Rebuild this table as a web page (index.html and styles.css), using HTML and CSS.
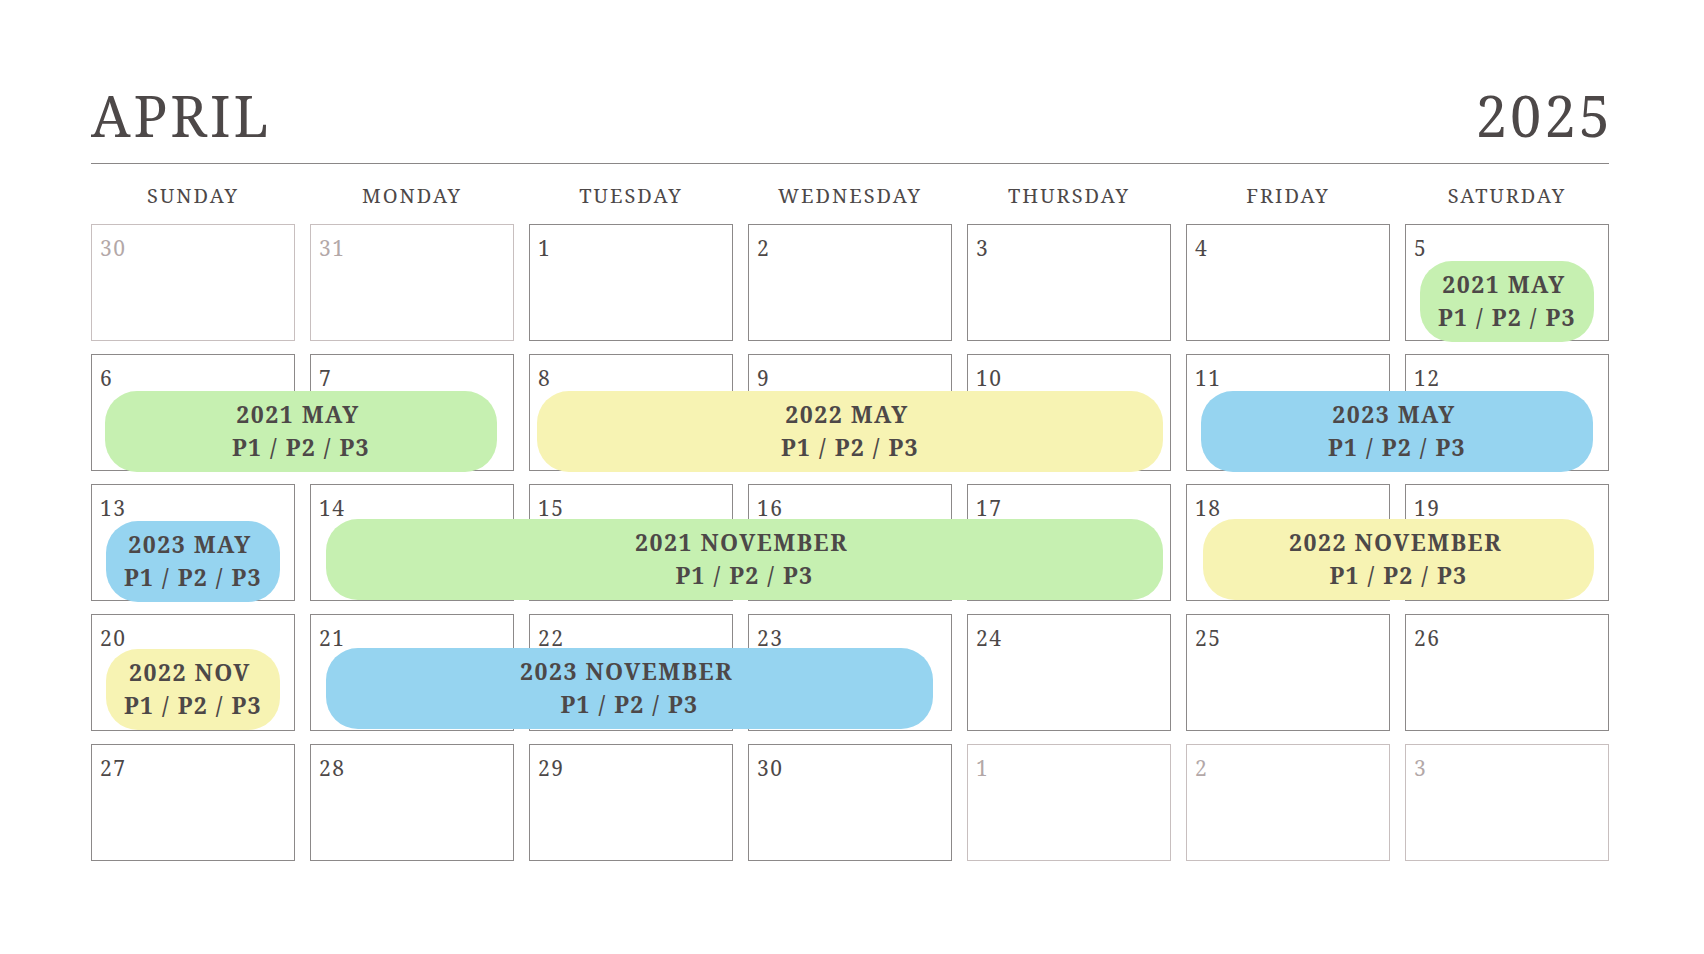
FILE: index.html
```html
<!DOCTYPE html>
<html lang="en">
<head>
<meta charset="utf-8">
<title>April 2025</title>
<link rel="stylesheet" href="styles.css">
</head>
<body>
<main class="page">
  <header class="head">
    <h1 class="month">APRIL</h1>
    <div class="year">2025</div>
  </header>
  <div class="weekdays">
    <div>SUNDAY</div><div>MONDAY</div><div>TUESDAY</div><div>WEDNESDAY</div><div>THURSDAY</div><div>FRIDAY</div><div>SATURDAY</div>
  </div>
  <div class="weeks">
    <div class="week">
      <div class="cell muted"><span class="num">30</span></div>
      <div class="cell muted"><span class="num">31</span></div>
      <div class="cell"><span class="num">1</span></div>
      <div class="cell"><span class="num">2</span></div>
      <div class="cell"><span class="num">3</span></div>
      <div class="cell"><span class="num">4</span></div>
      <div class="cell"><span class="num">5</span></div>
      <div class="event green ev-sat-1"><span class="t">2021 MAY</span><span>P1 / P2 / P3</span></div>
    </div>
    <div class="week">
      <div class="cell"><span class="num">6</span></div>
      <div class="cell"><span class="num">7</span></div>
      <div class="cell"><span class="num">8</span></div>
      <div class="cell"><span class="num">9</span></div>
      <div class="cell"><span class="num">10</span></div>
      <div class="cell"><span class="num">11</span></div>
      <div class="cell"><span class="num">12</span></div>
      <div class="event green ev-w2-sunmon"><span class="t">2021 MAY</span><span>P1 / P2 / P3</span></div>
      <div class="event yellow ev-w2-tuethu"><span class="t">2022 MAY</span><span>P1 / P2 / P3</span></div>
      <div class="event blue ev-w2-frisat"><span class="t">2023 MAY</span><span>P1 / P2 / P3</span></div>
    </div>
    <div class="week">
      <div class="cell"><span class="num">13</span></div>
      <div class="cell"><span class="num">14</span></div>
      <div class="cell"><span class="num">15</span></div>
      <div class="cell"><span class="num">16</span></div>
      <div class="cell"><span class="num">17</span></div>
      <div class="cell"><span class="num">18</span></div>
      <div class="cell"><span class="num">19</span></div>
      <div class="event blue ev-w3-sun"><span class="t">2023 MAY</span><span>P1 / P2 / P3</span></div>
      <div class="event green ev-w3-monthu"><span class="t">2021 NOVEMBER</span><span>P1 / P2 / P3</span></div>
      <div class="event yellow ev-w3-frisat"><span class="t">2022 NOVEMBER</span><span>P1 / P2 / P3</span></div>
    </div>
    <div class="week">
      <div class="cell"><span class="num">20</span></div>
      <div class="cell"><span class="num">21</span></div>
      <div class="cell"><span class="num">22</span></div>
      <div class="cell"><span class="num">23</span></div>
      <div class="cell"><span class="num">24</span></div>
      <div class="cell"><span class="num">25</span></div>
      <div class="cell"><span class="num">26</span></div>
      <div class="event yellow ev-w4-sun"><span class="t">2022 NOV</span><span>P1 / P2 / P3</span></div>
      <div class="event blue ev-w4-monwed"><span class="t">2023 NOVEMBER</span><span>P1 / P2 / P3</span></div>
    </div>
    <div class="week">
      <div class="cell"><span class="num">27</span></div>
      <div class="cell"><span class="num">28</span></div>
      <div class="cell"><span class="num">29</span></div>
      <div class="cell"><span class="num">30</span></div>
      <div class="cell muted"><span class="num">1</span></div>
      <div class="cell muted"><span class="num">2</span></div>
      <div class="cell muted"><span class="num">3</span></div>
    </div>
  </div>
</main>
</body>
</html>
```

FILE: styles.css
```css
* { box-sizing: border-box; }
html, body { margin: 0; padding: 0; background: #ffffff; }
body {
  font-family: "Noto Serif", "DejaVu Serif", "Liberation Serif", serif;
  color: #4d4848;
}
.page {
  width: 1518px;
  margin-left: 91px;
  padding-top: 87px;
}
.head {
  display: flex;
  justify-content: space-between;
  align-items: flex-start;
  padding-bottom: 20px;
  border-bottom: 1px solid #8a8787;
}
.month, .year {
  margin: 0;
  font-size: 56px;
  line-height: 56px;
  font-weight: 400;
  letter-spacing: 3px;
  color: #4d4848;
}
.year { margin-right: -4px; }
.weekdays {
  display: grid;
  grid-template-columns: repeat(7, 204px);
  column-gap: 15px;
  margin-top: 20px;
  font-size: 20px;
  line-height: 24px;
  letter-spacing: 2px;
  text-align: center;
  color: #4d4848;
}
.weeks {
  display: flex;
  flex-direction: column;
  gap: 13px;
  margin-top: 16px;
}
.week {
  display: grid;
  grid-template-columns: repeat(7, 204px);
  grid-template-rows: 117px;
  column-gap: 15px;
}
.cell {
  grid-row: 1;
  border: 1px solid #8c8989;
  padding: 9px 8px;
  background: #fff;
}
.cell:nth-child(1) { grid-column: 1; }
.cell:nth-child(2) { grid-column: 2; }
.cell:nth-child(3) { grid-column: 3; }
.cell:nth-child(4) { grid-column: 4; }
.cell:nth-child(5) { grid-column: 5; }
.cell:nth-child(6) { grid-column: 6; }
.cell:nth-child(7) { grid-column: 7; }
.num {
  display: block;
  font-size: 21px;
  line-height: 28px;
  letter-spacing: 1.5px;
  color: #4d4848;
}
.cell.muted { border-color: #c8bfbf; }
.cell.muted .num { color: #b3a8a8; }

.event {
  grid-row: 1;
  height: 81px;
  border-radius: 32px;
  display: flex;
  flex-direction: column;
  justify-content: center;
  align-items: center;
  align-self: start;
  font-weight: 700;
  font-size: 23px;
  line-height: 33px;
  letter-spacing: 1.5px;
  color: #4d4848;
  white-space: nowrap;
  padding-bottom: 2px;
}
.event .t { padding-right: 6px; }
.green { background: #c6f0b1; }
.yellow { background: #f7f3b3; }
.blue { background: #96d4f0; }

.ev-sat-1 { grid-column: 7 / 8; margin: 37px 15px 0 15px; }
.ev-w2-sunmon { grid-column: 1 / 3; margin: 37px 17px 0 14px; }
.ev-w2-tuethu { grid-column: 3 / 6; margin: 37px 8px 0 8px; }
.ev-w2-frisat { grid-column: 6 / 8; margin: 37px 16px 0 15px; }
.ev-w3-sun { grid-column: 1 / 2; margin: 37px 15px 0 15px; }
.ev-w3-monthu { grid-column: 2 / 6; margin: 35px 8px 0 16px; }
.ev-w3-frisat { grid-column: 6 / 8; margin: 35px 15px 0 17px; }
.ev-w4-sun { grid-column: 1 / 2; margin: 35px 15px 0 15px; }
.ev-w4-monwed { grid-column: 2 / 5; margin: 34px 19px 0 16px; }
```
